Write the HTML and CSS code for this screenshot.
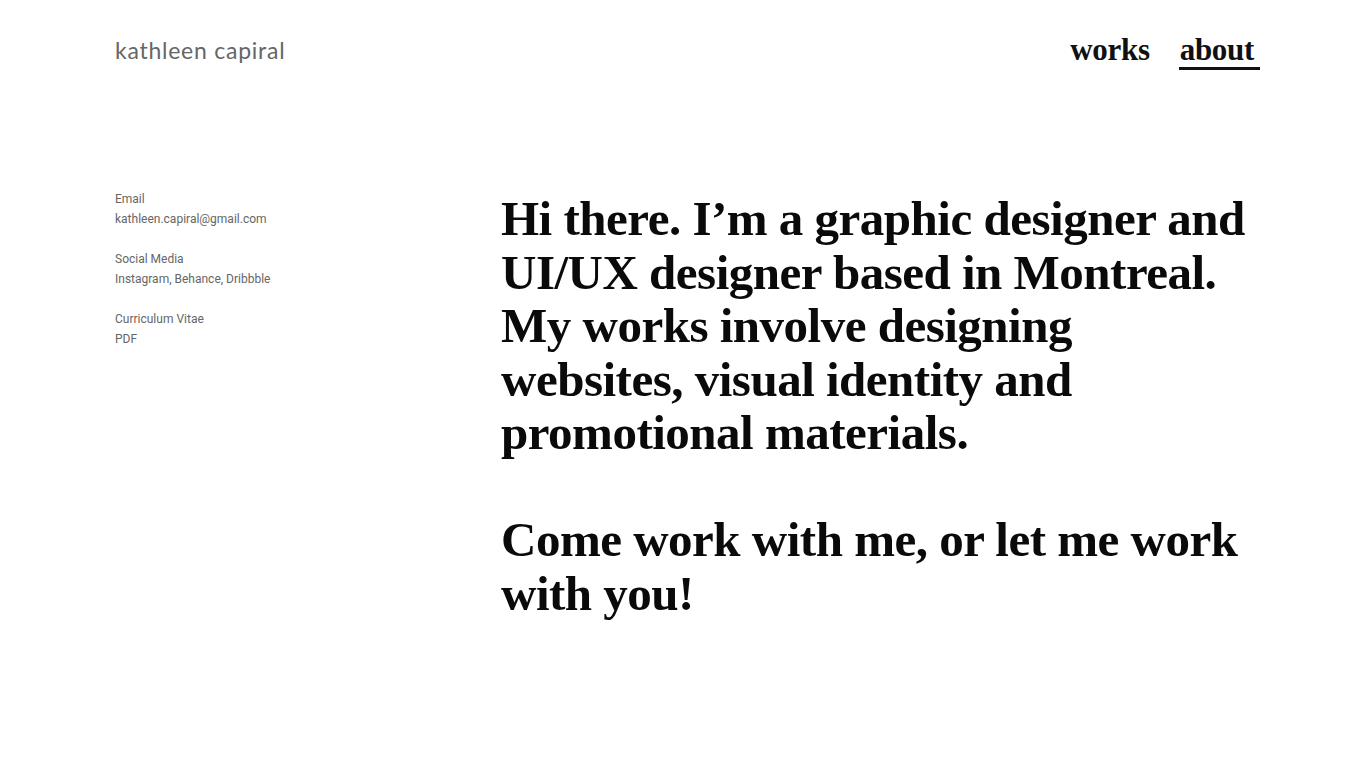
FILE: index.html
```
<!DOCTYPE html>
<html>
<head>
<meta charset="utf-8">
<link rel="stylesheet" href="styles.css">
</head>
<body>
<div class="page">
  <header class="header">
    <div class="logo">kathleen capiral</div>
    <nav class="nav">
      <a class="nav-link">works</a>
      <a class="nav-link active">about</a>
    </nav>
  </header>
  <main class="main">
    <aside class="info">
      <div class="group">
        <div>Email</div>
        <div>kathleen.capiral@gmail.com</div>
      </div>
      <div class="group">
        <div>Social Media</div>
        <div>Instagram, Behance, Dribbble</div>
      </div>
      <div class="group">
        <div>Curriculum Vitae</div>
        <div>PDF</div>
      </div>
    </aside>
    <section class="bio">
      <p>Hi there. I’m a graphic designer and UI/UX designer based in Montreal. My works involve designing websites, visual identity and promotional materials.</p>
      <p>Come work with me, or let me work with you!</p>
    </section>
  </main>
</div>
</body>
</html>
```
FILE: styles.css
```
html, body { margin: 0; padding: 0; background: #fff; }
.page { padding: 0 106px 0 115px; }
.header { display: flex; justify-content: space-between; align-items: flex-start; padding-top: 34px; height: 60px; }
.logo { font-family: "Lato", sans-serif; font-size: 23px; color: #666; letter-spacing: 0.75px; line-height: 32px; }
.nav { display: flex; gap: 29px; }
.nav-link { font-family: "Liberation Serif", serif; font-weight: bold; font-size: 31px; color: #111; letter-spacing: -0.3px; line-height: 32px; padding-bottom: 1px; }
.nav-link.active { border-bottom: 3px solid #111; padding-left: 1px; padding-right: 6px; }
.main { display: flex; margin-top: 95px; }
.info { width: 386px; font-family: "Roboto", sans-serif; font-size: 12px; color: #666; line-height: 20px; }
.group { margin-bottom: 20px; }
.bio { max-width: 750px; padding-top: 3px; font-family: "Liberation Serif", serif; font-weight: bold; font-size: 49px; line-height: 53.5px; color: #0a0a0a; letter-spacing: -0.5px; }
.bio p { margin: 0 0 53.5px 0; }
```
